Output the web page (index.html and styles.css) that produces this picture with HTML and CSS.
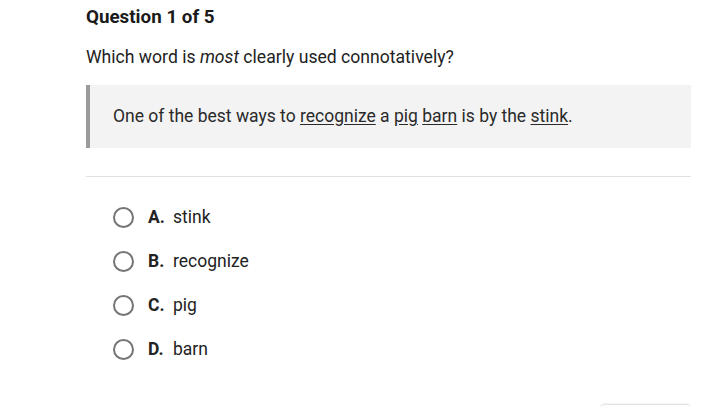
FILE: index.html
```html
<!DOCTYPE html>
<html>
<head>
<meta charset="utf-8">
<link rel="stylesheet" href="styles.css">
</head>
<body>
<main class="page">
  <h1 class="title">Question 1 of 5</h1>
  <p class="prompt">Which word is <em>most</em> clearly used connotatively?</p>
  <blockquote class="passage">One of the best ways to <u>recognize</u> a <u>pig</u> <u>barn</u> is by the <u>stink</u>.</blockquote>
  <hr class="divider">
  <ul class="options">
    <li class="option"><span class="radio"></span><span class="letter">A.</span><span class="text">stink</span></li>
    <li class="option"><span class="radio"></span><span class="letter">B.</span><span class="text">recognize</span></li>
    <li class="option"><span class="radio"></span><span class="letter">C.</span><span class="text">pig</span></li>
    <li class="option"><span class="radio"></span><span class="letter">D.</span><span class="text">barn</span></li>
  </ul>
  <div class="footer"><div class="submit"></div></div>
</main>
</body>
</html>
```
FILE: styles.css
```css
html, body {
  margin: 0;
  padding: 0;
  background: #fff;
  overflow: hidden;
}
body {
  font-family: Roboto, "Liberation Sans", sans-serif;
  color: #222;
}
.page {
  width: 605px;
  height: 407px;
  box-sizing: border-box;
  overflow: hidden;
  margin-left: 86px;
  padding-top: 5px;
}
.title {
  margin: 0;
  font-size: 18.8px;
  font-weight: 700;
  line-height: 24px;
  color: #1a1a1a;
}
.prompt {
  margin: 16px 0 0;
  font-size: 17.6px;
  line-height: 24px;
}
.prompt em {
  font-style: italic;
}
.passage {
  margin: 16px 0 0;
  height: 63px;
  box-sizing: border-box;
  padding: 19px 0 0 23px;
  border-left: 4px solid #9b9b9b;
  background: #f3f3f3;
  font-size: 17.5px;
  line-height: 24px;
  color: #2a2a2a;
}
.passage u {
  text-underline-offset: 2px;
}
.divider {
  margin: 28px 0 0;
  border: 0;
  border-top: 1px solid #e0e0e0;
  height: 0;
}
.options {
  list-style: none;
  margin: 18px 0 0;
  padding: 0 0 0 27px;
}
.option {
  display: flex;
  align-items: center;
  height: 44px;
  font-size: 17.5px;
}
.radio {
  width: 17px;
  height: 17px;
  border: 2px solid #757575;
  border-radius: 50%;
  box-sizing: content-box;
  margin-right: 14px;
}
.letter {
  font-weight: 700;
  width: 25px;
}
.footer {
  display: flex;
  justify-content: flex-end;
  margin-top: 34px;
}
.submit {
  width: 89px;
  height: 40px;
  margin-right: 1px;
  border-radius: 3px;
  background: #fff;
  box-shadow: 0 -1px 2px rgba(0,0,0,0.15);
}
```
